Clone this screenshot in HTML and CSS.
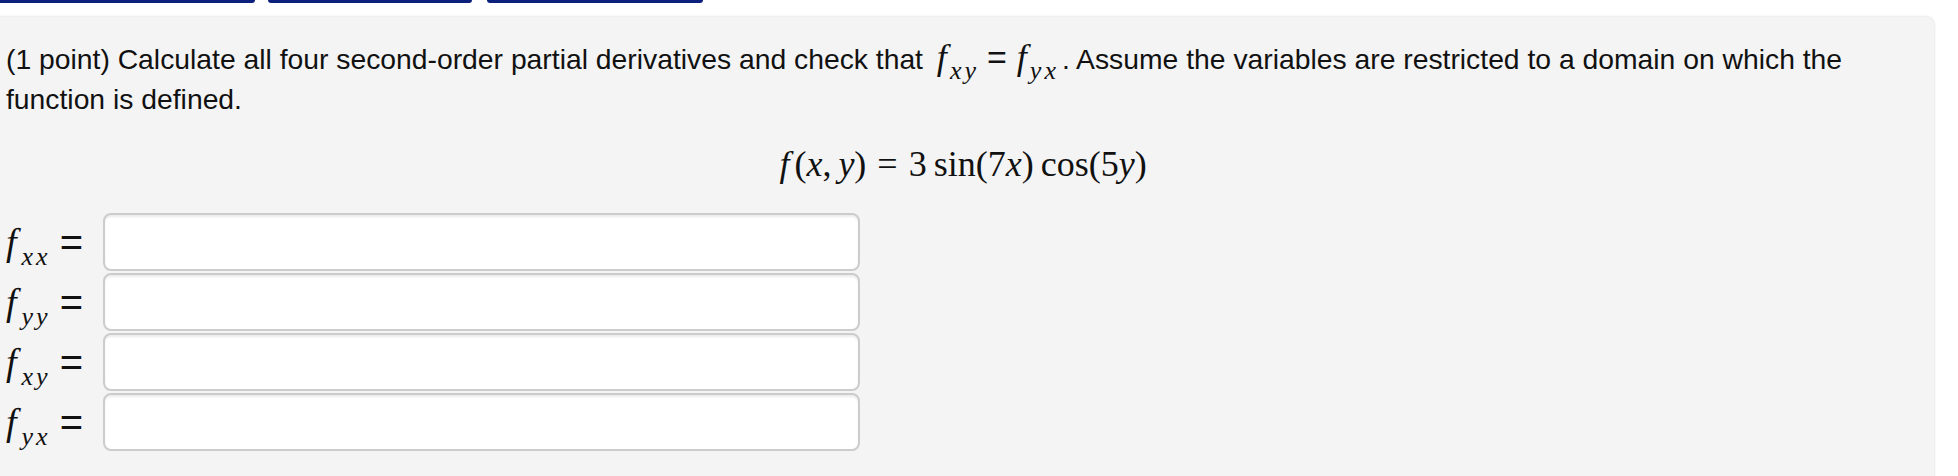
FILE: index.html
```html
<!DOCTYPE html>
<html>
<head>
<meta charset="utf-8">
<link rel="stylesheet" href="styles.css">
</head>
<body>
<div class="tabs">
  <span class="tab tab-a"></span>
  <span class="tab tab-b"></span>
  <span class="tab tab-c"></span>
</div>
<div class="panel">
  <p class="intro">(1 point) Calculate all four second-order partial derivatives and check that <span class="im"><i class="mf">f</i><sub class="ms">xy</sub><span class="ieq">=</span><i class="mf">f</i><sub class="ms">yx</sub></span>. Assume the variables are restricted to a domain on which the function is defined.</p>
  <div class="display"><span class="dm"><i class="df">f</i>(<i>x</i>,<span class="th"></span><i>y</i>)<span class="deq">=</span>3<span class="th"></span>sin(7<i>x</i>)<span class="th"></span>cos(5<i>y</i>)</span></div>
  <div class="answers">
    <div class="row"><span class="lbl"><i class="mf lf">f</i><sub class="ms">xx</sub></span><span class="eq">=</span><input class="ans" type="text"></div>
    <div class="row"><span class="lbl"><i class="mf lf">f</i><sub class="ms">yy</sub></span><span class="eq">=</span><input class="ans" type="text"></div>
    <div class="row"><span class="lbl"><i class="mf lf">f</i><sub class="ms">xy</sub></span><span class="eq">=</span><input class="ans" type="text"></div>
    <div class="row"><span class="lbl"><i class="mf lf">f</i><sub class="ms">yx</sub></span><span class="eq">=</span><input class="ans" type="text"></div>
  </div>
</div>
</body>
</html>
```
FILE: styles.css
```css
html, body {
  margin: 0;
  padding: 0;
  background: #ffffff;
  overflow: hidden;
}
body {
  font-family: "Liberation Sans", Arial, sans-serif;
  color: #111111;
}
.tabs {
  display: flex;
  gap: 13px;
  height: 3px;
}
.tab {
  display: block;
  height: 3px;
  background: #0b1f7c;
  border-radius: 0 0 8px 8px;
}
.tab-a { width: 255px; border-radius: 0 0 8px 0; }
.tab-b { width: 204px; margin-right: 2px; }
.tab-c { width: 216px; }

.panel {
  margin: 14px 0 0 -12px;
  width: 1946px;
  min-height: 520px;
  box-sizing: border-box;
  padding: 20px 14px 30px 18px;
  background: #f4f4f4;
  border-radius: 0 8px 0 0;
  box-shadow: 0 0 3px rgba(0, 0, 0, 0.18);
}
.intro {
  margin: 0;
  font-size: 28.3px;
  line-height: 40px;
}
.im {
  font-family: "Liberation Serif", "Times New Roman", serif;
  font-size: 36px;
  margin: 0 3px 0 6px;
}
.mf {
  font-style: italic;
  margin-right: 3px;
}
.lf {
  margin-right: 5px;
}
.ms {
  font-style: italic;
  font-size: 26px;
  letter-spacing: 3px;
  vertical-align: -10px;
  line-height: 0;
}
.ieq {
  font-family: "Liberation Sans", Arial, sans-serif;
  font-size: 34px;
  margin: 0 10px 0 8px;
}
.display {
  margin-top: 25px;
  text-align: center;
  font-family: "Liberation Serif", "Times New Roman", serif;
  font-size: 36px;
  line-height: 40px;
}
.df {
  margin-right: 5px;
}
.th {
  display: inline-block;
  width: 7px;
}
.deq {
  margin: 0 11px;
}
.answers {
  margin-top: 29px;
  display: flex;
  flex-direction: column;
  gap: 2px;
}
.row {
  display: flex;
  align-items: center;
  height: 58px;
}
.lbl {
  font-family: "Liberation Serif", "Times New Roman", serif;
  font-size: 38px;
  line-height: 40px;
}
.eq {
  font-size: 40px;
  margin: 0 20px 0 9px;
}
.ans {
  width: 757px;
  height: 58px;
  box-sizing: border-box;
  margin: 0;
  border: 2px solid #cccccc;
  border-radius: 8px;
  background: #ffffff;
  box-shadow: inset 0 2px 2px rgba(0, 0, 0, 0.075);
  outline: none;
}
```
